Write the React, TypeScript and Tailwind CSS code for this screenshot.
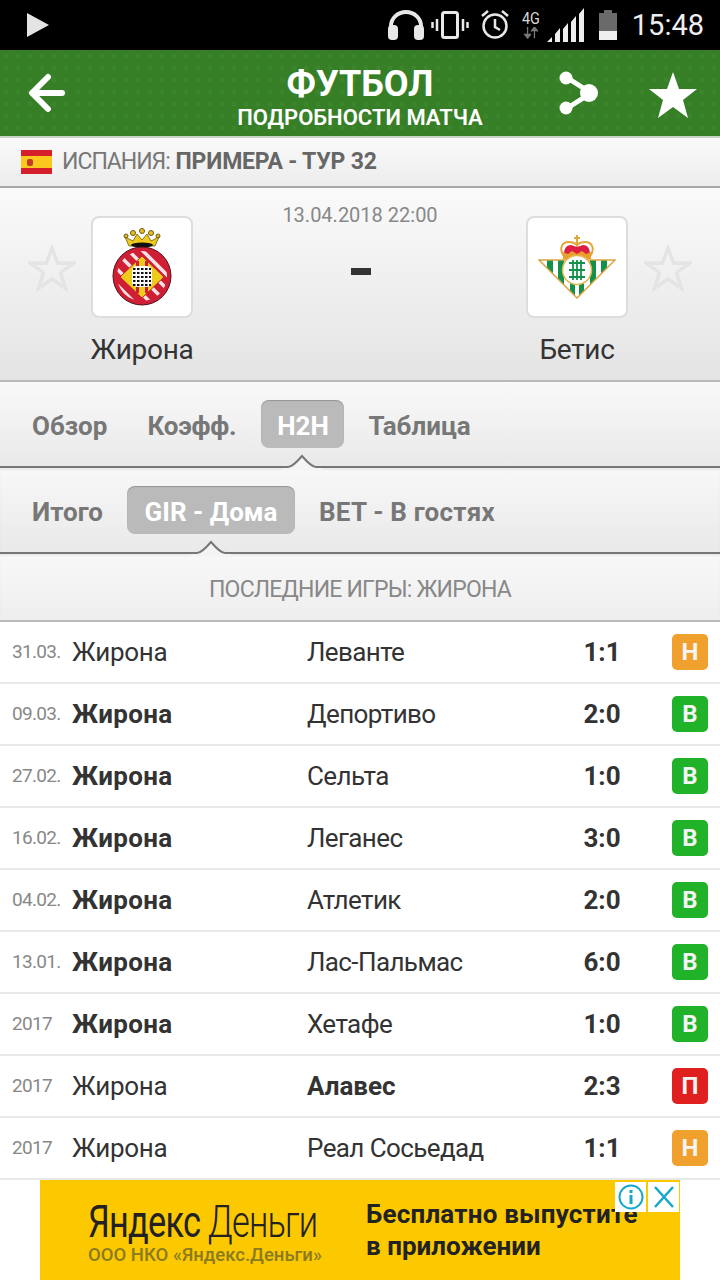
import React from "react";

type Match = {
  date: string;
  home: string;
  away: string;
  score: string;
  result: "Н" | "В" | "П";
  homeBold?: boolean;
  awayBold?: boolean;
};

const matches: Match[] = [
  { date: "31.03.", home: "Жирона", away: "Леванте", score: "1:1", result: "Н" },
  { date: "09.03.", home: "Жирона", away: "Депортиво", score: "2:0", result: "В", homeBold: true },
  { date: "27.02.", home: "Жирона", away: "Сельта", score: "1:0", result: "В", homeBold: true },
  { date: "16.02.", home: "Жирона", away: "Леганес", score: "3:0", result: "В", homeBold: true },
  { date: "04.02.", home: "Жирона", away: "Атлетик", score: "2:0", result: "В", homeBold: true },
  { date: "13.01.", home: "Жирона", away: "Лас-Пальмас", score: "6:0", result: "В", homeBold: true },
  { date: "2017", home: "Жирона", away: "Хетафе", score: "1:0", result: "В", homeBold: true },
  { date: "2017", home: "Жирона", away: "Алавес", score: "2:3", result: "П", awayBold: true },
  { date: "2017", home: "Жирона", away: "Реал Сосьедад", score: "1:1", result: "Н" },
];

const badgeColor = {
  Н: "bg-[#f0a02c]",
  В: "bg-[#20b32a]",
  П: "bg-[#e0201f]",
};

const StatusIcons = () => (
  <div className="flex items-center">
    <svg width="36" height="30" viewBox="0 0 36 30">
      <path d="M3 20V16a15 14 0 0 1 30 0v4" fill="none" stroke="#e8e8e8" strokeWidth="4" />
      <rect x="0" y="15" width="10" height="15" rx="4" fill="#e8e8e8" />
      <rect x="26" y="15" width="10" height="15" rx="4" fill="#e8e8e8" />
    </svg>
    <svg width="38" height="28" viewBox="0 0 38 28" className="ml-[7px]">
      <rect x="11.500" y="1.500" width="15" height="25" rx="2" fill="none" stroke="#e8e8e8" strokeWidth="3" />
      <path d="M6 8v12M1.500 11v6M32 8v12M36.500 11v6" stroke="#e8e8e8" strokeWidth="2.500" />
    </svg>
    <svg width="30" height="30" viewBox="0 0 30 30" className="ml-[11px]">
      <circle cx="15" cy="16" r="11.500" fill="none" stroke="#e8e8e8" strokeWidth="2.500" />
      <path d="M15 9v8l5 3M2 6l6-5M28 6l-6-5" fill="none" stroke="#e8e8e8" strokeWidth="2.500" />
    </svg>
    <div className="ml-[11px] flex w-[20px] flex-col items-center text-[16px] leading-[16px] text-[#d8d8d8]">
      <span className="scale-x-90">4G</span>
      <svg width="18" height="12" viewBox="0 0 18 14">
        <path d="M5 0v9M1 8l4 5 4-5M13 13V4M9 5l4-5 4 5" fill="#777" stroke="#777" strokeWidth="1.500" />
      </svg>
    </div>
    <svg width="38" height="34" viewBox="0 0 38 34" className="ml-[5px]">
      <path d="M1 34h5v-5l-5 5zM9 34h5V20l-5 6zM17 34h5V15l-5 6zM25 34h5V8l-5 6zM33 34h5V0l-5 6z" fill="#eeeeee" />
    </svg>
    <svg width="18" height="30" viewBox="0 0 18 30" className="ml-[15px]">
      <path d="M5 0h8v3h5v27H0V3h5z" fill="#6a6a6a" />
      <rect y="21" width="18" height="9" fill="#eeeeee" />
    </svg>
    <span className="ml-[15px] text-[29px] leading-none text-[#eeeeee]">15:48</span>
  </div>
);

// the little peak that sits on the line under the active tab
const Notch = ({ left }: { left: number }) => (
  <svg
    width="40"
    height="16"
    viewBox="0 0 40 16"
    className="absolute bottom-[-4px] z-10"
    style={{ left }}
  >
    <path d="M0 13h6C10 13 14 9 20 2c6 7 10 11 14 11h6v3H0z" fill="#f4f4f4" />
    <path d="M0 13h6C10 13 14 9 20 2c6 7 10 11 14 11h6" fill="none" stroke="#777777" strokeWidth="2" />
  </svg>
);

const EmptyStar = () => (
  <svg width="48" height="48" viewBox="0 0 48 48">
    <path
      d="M24 4l5.600 15.200h16L32.600 28.800l4.900 15.600L24 35l-13.500 9.400 4.900-15.600L2.400 19.200h16z"
      fill="none"
      stroke="#e4e4e4"
      strokeWidth="3.500"
    />
  </svg>
);

const GironaLogo = () => (
  <svg width="60" height="78" viewBox="0 0 60 78">
    <defs>
      <clipPath id="gir-ring">
        <circle cx="30" cy="48" r="25" />
      </clipPath>
    </defs>
    <circle cx="30" cy="3" r="2.500" fill="#e6c020" stroke="#6b5a10" />
    <circle cx="21" cy="5" r="2.500" fill="#e6c020" stroke="#6b5a10" />
    <circle cx="39" cy="5" r="2.500" fill="#e6c020" stroke="#6b5a10" />
    <circle cx="14" cy="8" r="2" fill="#e6c020" stroke="#6b5a10" />
    <circle cx="46" cy="8" r="2" fill="#e6c020" stroke="#6b5a10" />
    <path d="M13 9l4 9h26l4-9-8 4-4-7-5 6-5-6-4 7z" fill="#efcb1d" stroke="#6b5a10" strokeWidth="0.800" />
    <ellipse cx="30" cy="17" rx="11" ry="2.500" fill="#111111" />
    <circle cx="30" cy="48" r="29" fill="#d01f34" stroke="#4e0f15" strokeWidth="1" />
    <g clipPath="url(#gir-ring)">
      <path
        d="M0 20l60 60M8 14l60 60M16 8l60 60M-8 28l60 60M-16 36l60 60"
        stroke="#f7e3e3"
        strokeWidth="3.500"
      />
    </g>
    <path d="M30 28l22 21-22 21L8 49z" fill="#efcb1d" stroke="#c8202c" strokeWidth="1" />
    <path d="M24 33h3v32h-3zM33 33h3v32h-3z" fill="#d01f34" />
    <rect x="20" y="38" width="20" height="21" rx="5" fill="#ffffff" />
    <path d="M21 41h18M21 45h18M21 49h18M21 53h18M21 57h18" stroke="#111111" strokeWidth="2.200" strokeDasharray="2.500 1.500" />
  </svg>
);

const BetisLogo = () => (
  <svg width="78" height="64" viewBox="0 0 78 64">
    <defs>
      <clipPath id="bet-tri">
        <path d="M1 25h76L39 63z" />
      </clipPath>
    </defs>
    <path d="M1 25h76L39 63z" fill="#ffffff" />
    <g clipPath="url(#bet-tri)">
      <path d="M9 25h6v24H9zM20 25h6v30h-6zM52 25h6v30h-6zM63 25h6v24h-6zM32 48h5v16h-5zM41 48h5v16h-5z" fill="#13914b" />
    </g>
    <path d="M1 25h76L39 63z" fill="none" stroke="#d9a441" strokeWidth="1.500" />
    <path d="M26 21c-5-6-3-14 5-14 3 0 6 1 8 3 2-2 5-3 8-3 8 0 10 8 5 14z" fill="#ffffff" stroke="#e0a83a" strokeWidth="2" />
    <path d="M26 19c0-6 3-9 7-9l6 2 6-2c4 0 7 3 7 9z" fill="#dc1f45" />
    <path d="M39 0v12M36 3h6" stroke="#e0a83a" strokeWidth="2" />
    <path d="M25 17l5 2 4-3 5 3 5-3 4 3 5-2v7H25z" fill="#ea9f2a" />
    <circle cx="39" cy="35" r="14.500" fill="#ffffff" stroke="#e2b64e" strokeWidth="1.500" />
    <path d="M31 28h16M31 35h16M31 42h16M35 25v20M39 25v20M43 25v20" stroke="#13914b" strokeWidth="1.800" fill="none" />
  </svg>
);

const Team = ({ name, logo }: { name: string; logo: React.ReactNode }) => (
  <div className="flex w-[102px] flex-col items-center">
    <div className="flex h-[102px] w-[102px] items-center justify-center rounded-[8px] border-2 border-[#dddddd] bg-white">
      {logo}
    </div>
    <span className="mt-[14px] whitespace-nowrap text-[28px] leading-[36px] tracking-[-0.3px] text-[#333333]">{name}</span>
  </div>
);

export default function App() {
  return (
    <div className="relative h-[1280px] w-[720px] overflow-hidden bg-white font-['Roboto','Noto_Sans',sans-serif]">
      <div className="flex h-[50px] items-center justify-between bg-black pl-[27px] pr-[16px]">
        <svg width="22" height="24" viewBox="0 0 22 24">
          <path d="M0 0l22 12L0 24z" fill="#e4e4e4" />
        </svg>
        <StatusIcons />
      </div>

      <div className="grid h-[88px] grid-cols-[1fr_auto_1fr] items-center border-b-2 border-[#c9d3c6] bg-[#367f27] bg-[radial-gradient(#3b862c_2px,transparent_3px)] bg-[length:12px_12px] px-[23px]">
        <svg width="38" height="44" viewBox="0 0 38 44" className="ml-[5px]">
          <path d="M34 22H6M20 6 4 22l16 16" fill="none" stroke="#fff" strokeWidth="6" strokeLinecap="round" strokeLinejoin="round" />
        </svg>
        <div className="flex flex-col items-center pt-[8px] text-white">
          <span className="text-[36px] font-bold leading-[40px]">ФУТБОЛ</span>
          <span className="mt-[1px] text-[22px] font-semibold leading-[26px]">ПОДРОБНОСТИ МАТЧА</span>
        </div>
        <div className="flex items-center justify-end gap-[50px]">
          <svg width="40" height="44" viewBox="0 0 40 44">
            <path d="M7 6l25 16L7 38" fill="none" stroke="#fff" strokeWidth="5" />
            <circle cx="7" cy="7" r="6.500" fill="#fff" />
            <circle cx="7" cy="37" r="6.500" fill="#fff" />
            <circle cx="30" cy="22" r="9" fill="#fff" />
          </svg>
          <svg width="48" height="46" viewBox="0 0 48 46" className="mt-[4px]">
            <path d="M24 0l6 17h18L34 28l5 18-15-11L9 46l5-18L0 17h18z" fill="#fff" />
          </svg>
        </div>
      </div>

      <div className="flex h-[50px] items-center border-b-2 border-[#a8a8a8] bg-gradient-to-b from-[#fafafa] to-[#ececec] pl-[21px]">
        <div className="flex h-[24px] w-[31px] flex-col">
          <div className="h-[6px] bg-[#d5202c]" />
          <div className="flex h-[12px] items-center bg-[#fbc91e] pl-[6px]">
            <div className="h-[7px] w-[6px] rounded-[2px] bg-[#c23b22]" />
          </div>
          <div className="h-[6px] bg-[#d5202c]" />
        </div>
        <span className="ml-[10px] text-[23px] text-[#777777]">
          <span className="tracking-[-1px]">ИСПАНИЯ:</span>{" "}
          <span className="font-bold tracking-[-0.2px] text-[#666666]">ПРИМЕРА - ТУР 32</span>
        </span>
      </div>

      <div className="relative flex h-[192px] justify-between bg-gradient-to-b from-[#fafafa] to-[#e4e4e4] px-[28px] pt-[28px]">
        <div className="flex">
          <div className="mr-[15px] mt-[28px]">
            <EmptyStar />
          </div>
          <Team name="Жирона" logo={<GironaLogo />} />
        </div>
        <div className="absolute left-0 right-0 top-[13px] flex flex-col items-center">
          <span className="text-[20px] leading-[28px] text-[#888888]">13.04.2018 22:00</span>
          <div className="ml-[2px] mt-[39px] h-[7px] w-[20px] bg-[#333333]" />
        </div>
        <div className="flex">
          <Team name="Бетис" logo={<BetisLogo />} />
          <div className="ml-[16px] mt-[28px]">
            <EmptyStar />
          </div>
        </div>
      </div>

      <div className="relative flex h-[88px] items-center border-y-2 border-t-[#b8b8b8] border-b-[#777777] bg-gradient-to-b from-[#f9f9f9] to-[#e9e9e9] pl-[32px] text-[26px] font-bold text-[#777777]">
        <span className="mr-[40px] pt-[4px]">Обзор</span>
        <span className="mr-[25px] pt-[4px] tracking-[-0.2px]">Коэфф.</span>
        <span className="mr-[24px] flex h-[48px] w-[83px] items-center justify-center rounded-[8px] bg-[#bababa] pt-[4px] text-white shadow-[inset_0_1px_1px_rgba(0,0,0,0.2)]">H2H</span>
        <span className="pt-[4px]">Таблица</span>
        <Notch left={282} />
      </div>

      <div className="relative flex h-[86px] items-center border-b-2 border-[#777777] bg-gradient-to-b from-[#f8f8f8] to-[#e9e9e9] pl-[32px] text-[26px] font-bold text-[#777777] shadow-[inset_0_2px_2px_rgba(0,0,0,0.06)]">
        <span className="mr-[24px] pt-[4px]">Итого</span>
        <span className="mr-[24px] flex h-[48px] w-[168px] items-center justify-center rounded-[8px] bg-[#bababa] pt-[4px] text-white shadow-[inset_0_1px_1px_rgba(0,0,0,0.2)]">GIR - Дома</span>
        <span className="pt-[4px] tracking-[0.2px]">BET - В гостях</span>
        <Notch left={191} />
      </div>

      <div className="flex h-[68px] items-center justify-center border-b-2 border-[#bbbbbb] bg-gradient-to-b from-[#f8f8f8] to-[#eeeeee] pt-[6px] text-[23px] tracking-[-0.8px] text-[#888888] shadow-[inset_0_2px_2px_rgba(0,0,0,0.06)]">
        ПОСЛЕДНИЕ ИГРЫ: ЖИРОНА
      </div>

      {matches.map((m, i) => (
        <div key={i} className="flex h-[62px] items-center border-b-2 border-[#e8e8e8] pl-[12px] text-[26px] text-[#333333]">
          <span className="w-[60px] text-[19px] tracking-[-0.7px] text-[#888888]">{m.date}</span>
          <span className={`w-[235px] ${m.homeBold ? "font-bold tracking-[0.3px]" : "tracking-[-0.3px]"}`}>{m.home}</span>
          <span className={`w-[253px] ${m.awayBold ? "font-bold" : "tracking-[-0.6px]"}`}>{m.away}</span>
          <span className="w-[84px] text-center font-bold">{m.score}</span>
          <span className={`ml-[28px] flex h-[36px] w-[36px] items-center justify-center rounded-[5px] text-[24px] font-bold text-[#f4f4f4] ${badgeColor[m.result]}`}>
            {m.result}
          </span>
        </div>
      ))}

      <div className="relative mx-[40px] flex h-[100px] bg-[#fcc800] pl-[48px] pt-[17px] text-[#222222]">
        <div className="flex w-[278px] flex-col">
          <span className="origin-left scale-x-[0.78] whitespace-nowrap text-[44px] leading-[50px] tracking-[-1px]">
            Яндекс <span className="font-light">Деньги</span>
          </span>
          <span className="mt-[-3px] whitespace-nowrap text-[18.500px] font-medium leading-[22px] text-[#8a7a20]">ООО НКО «Яндекс.Деньги»</span>
        </div>
        <div className="flex flex-col pt-[1px] text-[26px] font-bold leading-[32px]">
          <span className="whitespace-nowrap tracking-[0.2px]">Бесплатно выпустите</span>
          <span>в приложении</span>
        </div>
        <div className="absolute right-[1px] top-[2px] flex gap-[2px]">
          <span className="flex h-[30px] w-[31px] items-center justify-center bg-white">
            <svg width="26" height="26" viewBox="0 0 26 26">
              <circle cx="13" cy="13" r="11.500" fill="none" stroke="#17a8c9" strokeWidth="2" />
              <path d="M13 6v3M13 11v9" stroke="#17a8c9" strokeWidth="3" />
            </svg>
          </span>
          <span className="flex h-[30px] w-[31px] items-center justify-center bg-white">
            <svg width="22" height="24" viewBox="0 0 22 24">
              <path d="M2 2l18 20M20 2 2 22" stroke="#17a8c9" strokeWidth="2.500" />
            </svg>
          </span>
        </div>
      </div>
    </div>
  );
}
